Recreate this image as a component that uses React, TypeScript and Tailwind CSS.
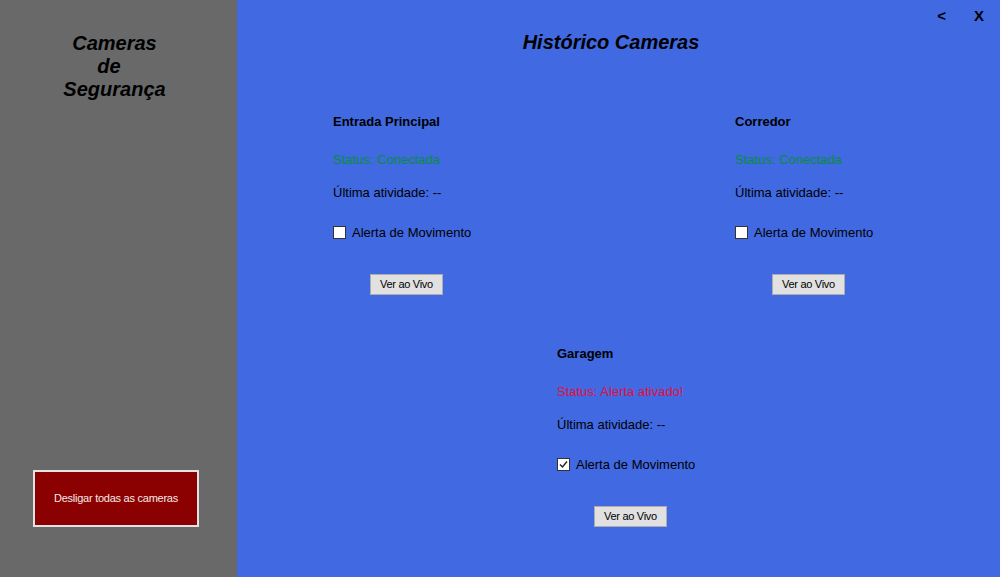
import { ReactNode } from "react";

type Camera = {
  name: string;
  status: string;
  alert: boolean;
};

const cameras: Camera[] = [
  { name: "Entrada Principal", status: "Status: Conectada", alert: false },
  { name: "Corredor", status: "Status: Conectada", alert: false },
  { name: "Garagem", status: "Status: Alerta ativado!", alert: true },
];

function Checkbox({ checked, children }: { checked: boolean; children: ReactNode }) {
  return (
    <div className="flex items-center gap-[6px] h-[15px] leading-[15px] text-[13px] text-black">
      <span className="w-[13px] h-[13px] border border-[#333333] bg-white flex items-center justify-center">
        {checked && (
          <svg width="9" height="9" viewBox="0 0 9 9" fill="none">
            <path d="M1 4.5 L3.5 7 L8 1.5" stroke="#222" strokeWidth="1.4" />
          </svg>
        )}
      </span>
      <span>{children}</span>
    </div>
  );
}

function CameraCard({ camera }: { camera: Camera }) {
  return (
    <div className="flex flex-col items-start">
      <p className="text-[13px] leading-[15px] font-bold text-black">{camera.name}</p>
      <p
        className={
          "mt-[23px] text-[13px] leading-[15px] " +
          (camera.alert ? "text-[#e0103c]" : "text-[#088c3c]")
        }
      >
        {camera.status}
      </p>
      <p className="mt-[18px] text-[13px] leading-[15px] text-black">Última atividade: --</p>
      <div className="mt-[25px]">
        <Checkbox checked={camera.alert}>Alerta de Movimento</Checkbox>
      </div>
      <button className="mt-[34px] ml-[37px] w-[73px] h-[21px] bg-[#e1e1e1] border border-[#adadad] text-[11px] tracking-[-0.3px] text-black">
        Ver ao Vivo
      </button>
    </div>
  );
}

function Sidebar() {
  return (
    <aside className="w-[237px] shrink-0 h-full bg-[#696969] flex flex-col pt-[32px] pb-[50px]">
      <h1 className="pr-[8px] text-center text-[20px] leading-[23px] font-bold italic text-black whitespace-pre">
        {"Cameras\nde  \nSegurança"}
      </h1>
      <div className="mt-auto ml-[33px] w-[166px] h-[57px] border-2 border-[#e3e3e3] bg-[#8b0000] flex items-center justify-center">
        <span className="text-[11px] tracking-[-0.25px] text-[#f7e8e8]">Desligar todas as cameras</span>
      </div>
    </aside>
  );
}

export default function App() {
  return (
    <div className="w-[1000px] h-[577px] flex overflow-hidden font-['Liberation_Sans',Arial,sans-serif]">
      <Sidebar />
      <main className="flex-1 h-full bg-[#4169e1] flex flex-col pt-[7px]">
        <div className="h-[17px] flex justify-end items-center gap-[28px] pr-[16px] text-[15px] leading-[17px] font-bold text-black">
          <span>&lt;</span>
          <span>X</span>
        </div>
        <h2 className="mt-[7px] pr-[15px] text-center text-[20px] leading-[23px] font-bold italic text-black">
          Histórico Cameras
        </h2>
        <div className="mt-[60px] flex pl-[96px]">
          <div className="w-[402px]">
            <CameraCard camera={cameras[0]} />
          </div>
          <CameraCard camera={cameras[1]} />
        </div>
        <div className="mt-[51px] pl-[320px]">
          <CameraCard camera={cameras[2]} />
        </div>
      </main>
    </div>
  );
}
